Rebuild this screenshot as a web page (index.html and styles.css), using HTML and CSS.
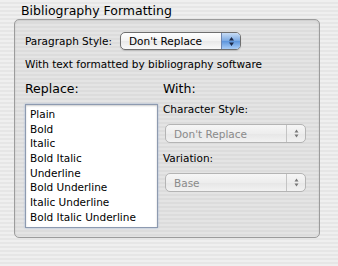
FILE: index.html
```html
<!DOCTYPE html>
<html lang="en">
<head>
  <meta charset="UTF-8">
  <title>Bibliography Formatting</title>
  <link rel="stylesheet" href="styles.css">
</head>
<body>
  <div class="pane">
    <div class="group-title">Bibliography Formatting</div>
    <div class="group">
      <div class="row">
        <span class="label">Paragraph Style:</span>
        <div class="popup">
          <span>Don't Replace</span>
          <span class="arrows">
            <svg width="7" height="11" viewBox="0 0 7 11"><path d="M3.5 1 L6 4.5 L1 4.5 Z M3.5 10 L6 6.5 L1 6.5 Z" fill="#1c2a4a"/></svg>
          </span>
        </div>
      </div>
      <div class="note">With text formatted by bibliography software</div>
      <div class="columns">
        <div class="col-left">
          <div class="heading">Replace:</div>
          <ul class="list">
            <li>Plain</li>
            <li>Bold</li>
            <li>Italic</li>
            <li>Bold Italic</li>
            <li>Underline</li>
            <li>Bold Underline</li>
            <li>Italic Underline</li>
            <li>Bold Italic Underline</li>
          </ul>
        </div>
        <div class="col-right">
          <div class="heading">With:</div>
          <div class="field-label">Character Style:</div>
          <div class="popup disabled">
            <span>Don't Replace</span>
            <span class="arrows">
              <svg width="7" height="11" viewBox="0 0 7 11"><path d="M3.5 1.5 L5.5 4.5 L1.5 4.5 Z M3.5 9.5 L5.5 6.5 L1.5 6.5 Z" fill="#777"/></svg>
            </span>
          </div>
          <div class="field-label">Variation:</div>
          <div class="popup disabled">
            <span>Base</span>
            <span class="arrows">
              <svg width="7" height="11" viewBox="0 0 7 11"><path d="M3.5 1.5 L5.5 4.5 L1.5 4.5 Z M3.5 9.5 L5.5 6.5 L1.5 6.5 Z" fill="#777"/></svg>
            </span>
          </div>
        </div>
      </div>
    </div>
  </div>
</body>
</html>
```

FILE: styles.css
```css
/* Aqua-style preference pane */
html, body {
  margin: 0;
  padding: 0;
}
body {
  width: 338px;
  height: 266px;
  font-family: "DejaVu Sans", sans-serif;
  font-size: 10.5px;
  color: #000;
  background: repeating-linear-gradient(to bottom, #efefef 0, #efefef 2px, #e6e6e6 2px, #e6e6e6 4px);
  overflow: hidden;
}
.pane {
  padding: 3px 18px 0 14px;
}
.group-title {
  font-size: 12.5px;
  margin-left: 7px;
  height: 16px;
  line-height: 16px;
}
.group {
  box-sizing: border-box;
  width: 306px;
  height: 219px;
  border: 1px solid #9c9c9c;
  border-radius: 5px;
  background: repeating-linear-gradient(to bottom, #e4e4e4 0, #e4e4e4 2px, #dcdcdc 2px, #dcdcdc 4px);
  box-shadow: inset 0 1px 2px rgba(0,0,0,0.12);
  padding: 12px 0 0 10px;
}
.row {
  display: flex;
  align-items: center;
  gap: 8px;
}
.popup {
  box-sizing: border-box;
  width: 121px;
  height: 18px;
  display: flex;
  align-items: center;
  justify-content: space-between;
  border: 1px solid #6f6f6f;
  border-radius: 5px;
  background: linear-gradient(#ffffff, #f2f2f2 50%, #e8e8e8 51%, #fafafa);
  padding-left: 8px;
  font-size: 10.5px;
  overflow: hidden;
  box-shadow: 0 1px 1px rgba(0,0,0,0.15);
}
.popup .arrows {
  width: 18px;
  height: 100%;
  display: flex;
  align-items: center;
  justify-content: center;
  border-left: 1px solid #6f86b0;
  background: linear-gradient(#c8dcf5, #7aa8e2 50%, #5b94dc 51%, #a9cdf7);
}
.note {
  margin-top: 8px;
  height: 13px;
  line-height: 13px;
}
.columns {
  display: flex;
  margin-top: 10px;
}
.heading {
  font-size: 12.5px;
  height: 16px;
  line-height: 16px;
}
.col-left {
  width: 138px;
}
.list {
  box-sizing: border-box;
  list-style: none;
  margin: 7px 0 0 0;
  padding: 2px 0 0 4px;
  width: 133px;
  height: 124px;
  background: #fff;
  border: 1px solid #8d9ab0;
  box-shadow: inset 0 1px 2px rgba(0,0,0,0.2), 0 0 2px #a6bbd8;
}
.list li {
  height: 14.7px;
  line-height: 14.7px;
}
.col-right {
  width: 145px;
}
.field-label {
  margin-top: 9px;
  height: 13px;
  line-height: 13px;
}
.col-right .heading + .field-label {
  margin-top: 6px;
}
.col-right .popup {
  margin: 8px 0 0 2px;
  width: 141px;
  height: 19px;
}
.popup.disabled {
  border-color: #b4b4b4;
  color: #8a8a8a;
  background: linear-gradient(#f6f6f6, #ededed 50%, #e6e6e6 51%, #f2f2f2);
  box-shadow: none;
}
.popup.disabled .arrows {
  background: transparent;
  border-left: 1px solid #c4c4c4;
}
```
